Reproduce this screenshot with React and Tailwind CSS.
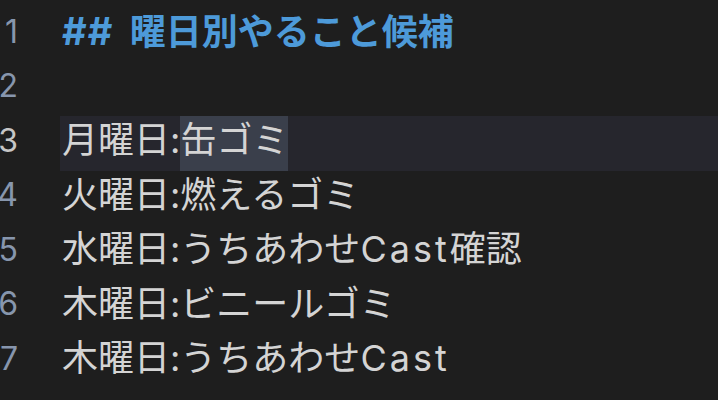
export default function App() {
  const lines = [
    { n: 1, type: "h" },
    { n: 2, text: "" },
    { n: 3, current: true, pre: "月曜日:", sel: "缶ゴミ" },
    { n: 4, text: "火曜日:燃えるゴミ" },
    { n: 5, text: "水曜日:うちあわせ", latin: "Cast", tail: "確認" },
    { n: 6, text: "木曜日:ビニールゴミ" },
    { n: 7, text: "木曜日:うちあわせ", latin: "Cast" },
    { n: 8, text: "" },
  ];
  return (
    <div className="w-[718px] h-[400px] bg-[#1e1e1e] overflow-hidden pt-[7px] font-['Inter','Noto_Sans_CJK_JP',sans-serif]">
      {lines.map((l) => (
        <div key={l.n} className="flex h-[54.5px] items-center">
          <div
            className={`w-[18px] shrink-0 h-full flex items-center justify-end pb-[5px] text-[32px] leading-none overflow-hidden ${
              l.current ? "text-[#c6c6c6]" : "text-[#8796ad]"
            } ${l.n === 8 ? "invisible" : ""}`}
          >
            {l.n}
          </div>
          <div className="w-[42px] shrink-0" />
          <div
            className={`flex-1 h-full flex items-center pl-[2px] pb-[6px] text-[36px] leading-none whitespace-pre ${
              l.current ? "bg-[#26262d]" : ""
            }`}
          >
            {l.type === "h" ? (
              <span className="font-bold text-[#4d9ad9]">
                <span className="text-[38px] tracking-[1px]">##</span>
                <span className="ml-[8px]"> 曜日別やること候補</span>
              </span>
            ) : l.current ? (
              <>
                <span className="text-[#d4d4d4]">{l.pre}</span>
                <span className="text-[#d4d4d4] bg-[#3a3f4b] h-[55px] -mb-[6px] pb-[6px] flex items-center">{l.sel}</span>
              </>
            ) : (
              <span className="text-[#d4d4d4]">
                {l.text}
                {l.latin && <span className="tracking-[3px]">{l.latin}</span>}
                {l.tail}
              </span>
            )}
          </div>
        </div>
      ))}
    </div>
  );
}
